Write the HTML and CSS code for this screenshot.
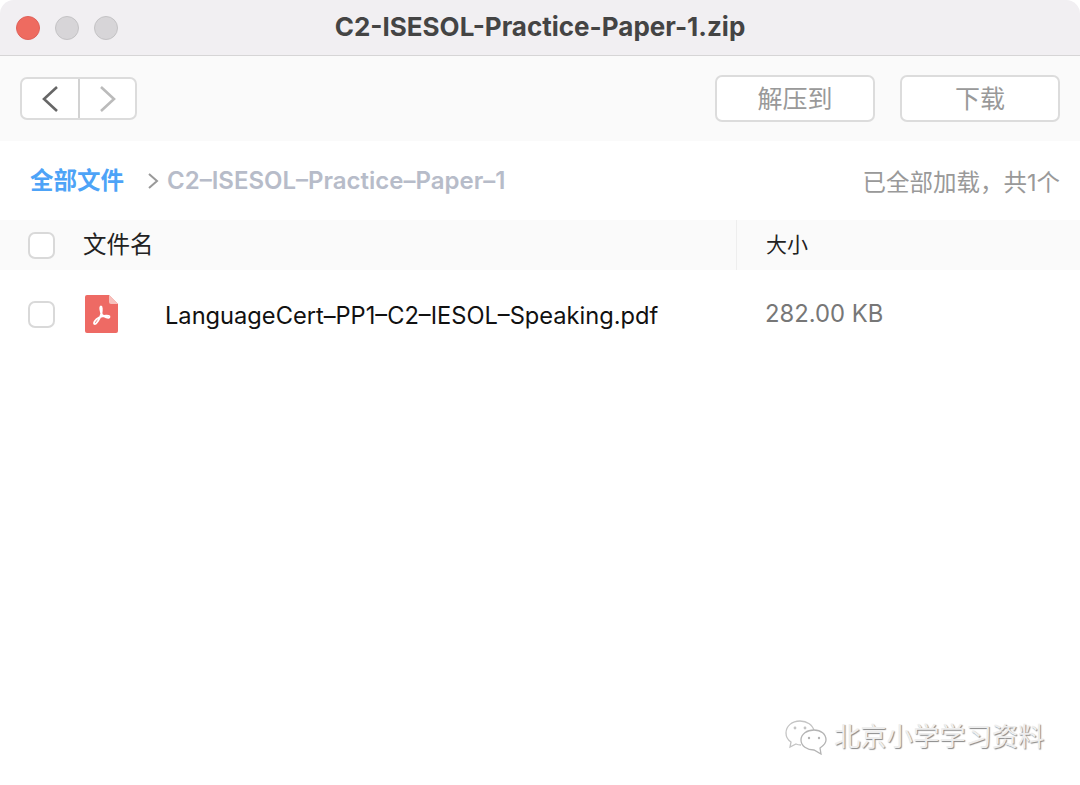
FILE: index.html
```html
<!DOCTYPE html>
<html lang="en">
<head>
    <meta charset="UTF-8">
    <meta name="viewport" content="width=device-width, initial-scale=1.0">
    <title>C2-ISESOL-Practice-Paper-1.zip</title>
    <link rel="stylesheet" href="styles.css">
</head>
<body>
    <div class="window">
        <div class="titlebar">
            <div class="lights">
                <span class="light light-close"></span>
                <span class="light"></span>
                <span class="light"></span>
            </div>
            <div class="title">C2-ISESOL-Practice-Paper-1.zip</div>
        </div>

        <div class="toolbar">
            <div class="nav-group">
                <div class="nav-btn nav-back">
                    <svg width="18" height="28" viewBox="0 0 18 28"><path d="M16 2 L3 14 L16 26" fill="none" stroke="#666" stroke-width="2.6"/></svg>
                </div>
                <div class="nav-btn">
                    <svg width="18" height="28" viewBox="0 0 18 28"><path d="M2 2 L15 14 L2 26" fill="none" stroke="#bbb" stroke-width="2.6"/></svg>
                </div>
            </div>
            <div class="actions">
                <div class="action-btn">解压到</div>
                <div class="action-btn">下载</div>
            </div>
        </div>

        <div class="crumbs">
            <span class="crumb-root">全部文件</span>
            <svg class="crumb-sep" width="12" height="18" viewBox="0 0 12 18"><path d="M2 2 L10 9 L2 16" fill="none" stroke="#999" stroke-width="2"/></svg>
            <span class="crumb-current">C2–ISESOL–Practice–Paper–1</span>
            <span class="crumb-count">已全部加载，共1个</span>
        </div>

        <div class="table-head">
            <div class="col-name">
                <span class="check"></span>
                <span class="head-label">文件名</span>
            </div>
            <div class="col-size head-size"><span class="head-size-label">大小</span></div>
        </div>

        <div class="file-row">
            <div class="col-name">
                <span class="check"></span>
                <svg class="file-icon" width="34" height="38" viewBox="0 0 34 38">
                    <path d="M2 0 H24 L33 9 V36 a2 2 0 0 1 -2 2 H2 a2 2 0 0 1 -2 -2 V2 a2 2 0 0 1 2 -2 Z" fill="#ee6a64"/>
                    <path d="M24 0 L33 9 H26 a2 2 0 0 1 -2 -2 Z" fill="#f7c0bc"/>
                    <path d="M16 11.5 C14.5 11.5 15.5 17 17 19.5 C19 22 24 24 24.5 22 C25 20 18 20.5 14 22.5 C10 24.5 8 28.5 9.5 29 C11 29.5 15 24 16.5 18 C17 15 17 11.5 16 11.5 Z" fill="none" stroke="#fff" stroke-width="1.8"/>
                </svg>
                <span class="file-name">LanguageCert–PP1–C2–IESOL–Speaking.pdf</span>
            </div>
            <div class="col-size file-size">282.00 KB</div>
        </div>
    </div>

    <div class="watermark">
        <svg width="44" height="36" viewBox="0 0 44 36">
            <path d="M16 2 C8 2 2 7 2 14 C2 18 4 21 7 23 L6 28 L12 25 C14 26 15 26 17 26" fill="#fff" stroke="#c4c4c4" stroke-width="1.3"/>
            <path d="M16 2 C23 2 29 6 30 12" fill="none" stroke="#c4c4c4" stroke-width="1.3"/>
            <path d="M30 11 C23 11 17 15 17 21 C17 27 23 31 30 31 L37 35 L36 29 C39 27 42 24 42 21 C42 15 37 11 30 11 Z" fill="#fff" stroke="#b4b4b4" stroke-width="1.3"/>
            <circle cx="11" cy="9" r="1.4" fill="#c4c4c4"/>
            <circle cx="21" cy="9" r="1.4" fill="#c4c4c4"/>
            <circle cx="25" cy="19" r="1.2" fill="#b4b4b4"/>
            <circle cx="35" cy="19" r="1.2" fill="#b4b4b4"/>
        </svg>
        <span class="watermark-text">北京小学学习资料</span>
    </div>
</body>
</html>
```

FILE: styles.css
```css
* {
    margin: 0;
    padding: 0;
    box-sizing: border-box;
    font-family: Inter, "Noto Sans CJK SC", sans-serif;
}

body {
    width: 1080px;
    height: 785px;
    background: white;
    overflow: hidden;
    position: relative;
}

.window {
    height: 100%;
}

.titlebar {
    height: 56px;
    background: #f1eff2;
    border-bottom: 1px solid #d6d5d6;
    border-radius: 14px 14px 0 0;
    display: flex;
    align-items: center;
    padding-left: 16px;
}

.lights {
    display: flex;
    gap: 15px;
}

.light {
    width: 24px;
    height: 24px;
    border-radius: 50%;
    background: #d7d5d8;
    border: 1px solid #c4c3c5;
}

.light-close {
    background: #ee6b60;
    border-color: #e0615a;
}

.title {
    flex: 1;
    text-align: center;
    font-size: 26px;
    font-weight: 700;
    color: #444;
    margin-right: 118px;
    margin-bottom: 2px;
}

.toolbar {
    height: 85px;
    background: #fafafa;
    display: flex;
    justify-content: space-between;
    align-items: center;
    padding: 0 20px;
}

.nav-group {
    display: flex;
    width: 117px;
    height: 43px;
    background: white;
    border: 2px solid #dcdcdc;
    border-radius: 7px;
}

.nav-btn {
    flex: 1;
    display: flex;
    justify-content: center;
    align-items: center;
}

.nav-back {
    flex: 0 0 58px;
    border-right: 2px solid #d2d2d2;
}

.actions {
    display: flex;
    gap: 25px;
}

.action-btn {
    width: 160px;
    height: 47px;
    background: white;
    border: 2px solid #dcdcdc;
    border-radius: 7px;
    display: flex;
    justify-content: center;
    align-items: center;
    padding-bottom: 4px;
    font-size: 25px;
    color: #999;
}

.crumbs {
    height: 79px;
    display: flex;
    align-items: center;
    padding: 0 20px 0 30px;
}

.crumb-root {
    font-size: 23.5px;
    font-weight: 600;
    color: #4da3f7;
    margin-bottom: 4px;
}

.crumb-sep {
    margin: 0 8px 0 23px;
}

.crumb-current {
    font-size: 24px;
    font-weight: 600;
    color: #b7bcc9;
}

.crumb-count {
    margin-left: auto;
    font-size: 23.5px;
    color: #999;
}

.table-head {
    height: 50px;
    background: #fafafa;
    display: flex;
    align-items: center;
}

.col-name {
    width: 736px;
    height: 100%;
    display: flex;
    align-items: center;
    padding-left: 28px;
}

.col-size {
    flex: 1;
    padding-left: 29px;
}

.head-size {
    height: 100%;
    display: flex;
    align-items: center;
    border-left: 1px solid #eee;
    font-size: 21px;
    color: #222;
}

.head-size-label {
    margin-bottom: 4px;
}

.check {
    width: 27px;
    height: 27px;
    background: white;
    border: 2px solid #d9d9d9;
    border-radius: 7px;
}

.head-label {
    margin-left: 28px;
    margin-bottom: 4px;
    font-size: 23.5px;
    color: #222;
}

.file-row {
    height: 88px;
    display: flex;
    align-items: center;
}

.file-icon {
    margin-left: 30px;
}

.file-name {
    margin-left: 46px;
    margin-top: 2px;
    font-size: 23.65px;
    color: #111;
}

.file-size {
    margin-bottom: 2px;
    font-size: 23.8px;
    color: #777;
}

.watermark {
    position: absolute;
    left: 784px;
    top: 715px;
    display: flex;
    align-items: center;
    gap: 6px;
}

.watermark-text {
    font-size: 26.3px;
    color: #eee;
    text-shadow: 1px 1px 1px #888;
    margin-bottom: 4px;
}
```
